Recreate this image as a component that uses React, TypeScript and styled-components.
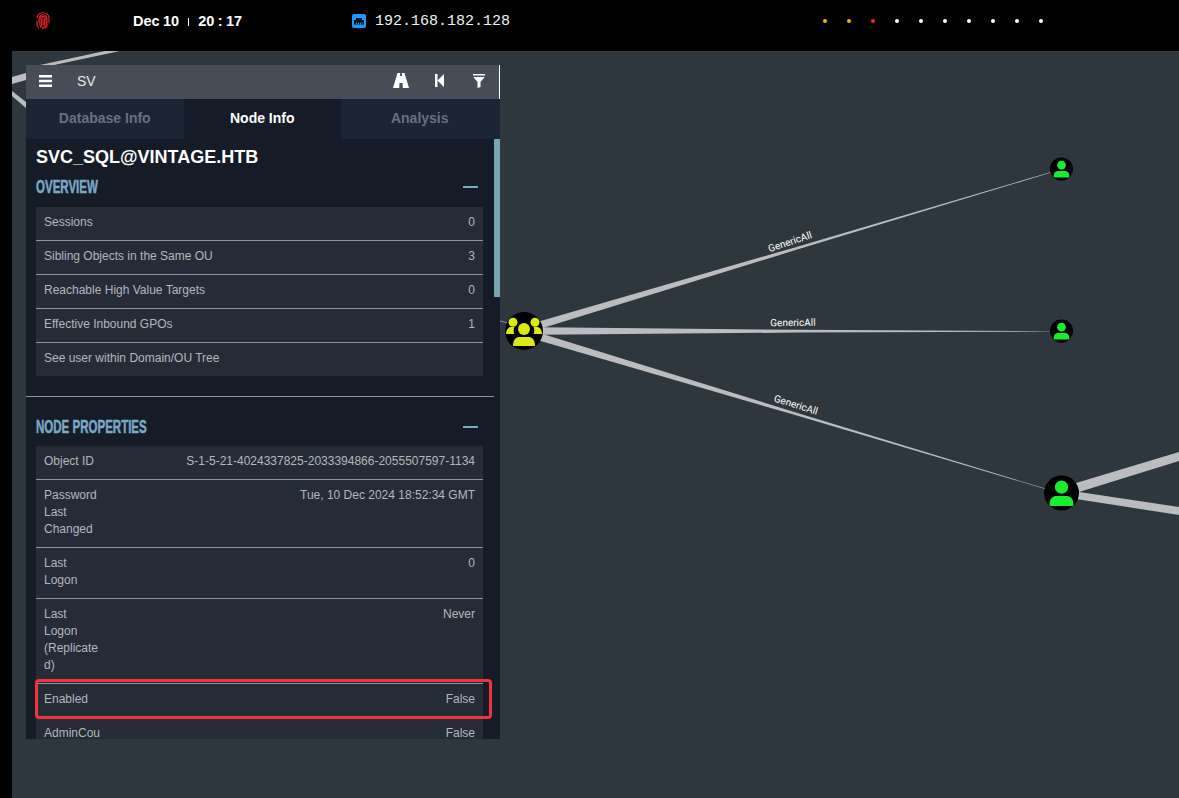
import styled, { createGlobalStyle } from "styled-components";

const overview = [
  { key: "Sessions", value: "0" },
  { key: "Sibling Objects in the Same OU", value: "3" },
  { key: "Reachable High Value Targets", value: "0" },
  { key: "Effective Inbound GPOs", value: "1" },
  { key: "See user within Domain/OU Tree", value: "" },
];

const properties = [
  { key: "Object ID", value: "S-1-5-21-4024337825-2033394866-2055507597-1134", wide: true },
  { key: "Password Last Changed", value: "Tue, 10 Dec 2024 18:52:34 GMT" },
  { key: "Last Logon", value: "0" },
  { key: "Last Logon (Replicated)", value: "Never" },
  { key: "Enabled", value: "False", marked: true },
  { key: "AdminCou", value: "False" },
];

const dots = ["#f5b400", "#f5b400", "#f0262c", "#fff", "#fff", "#fff", "#fff", "#fff", "#fff", "#fff"];

const Fingerprint = () => (
  <svg width="14" height="18" viewBox="0 0 14 18" fill="none" stroke="#e0252d" strokeWidth="1.100">
    <path d="M1 6.500C1 3 3.500.8 7 .8s6 2.200 6 5.700v5" />
    <path d="M1 8.500v3.200c0 2 .7 3.400 1.800 4.400M3 11V6.800C3 4.400 4.800 2.800 7 2.800s4 1.600 4 4v6.400c0 1-.2 1.800-.5 2.600" />
    <path d="M5 15.800c-.7-1.200-1-2.400-1-3.800V7c0-1.700 1.300-2.600 3-2.600S10 5.300 10 7v6c0 1.300-.3 2.400-.9 3.600" />
    <path d="M7 17c-.8-1.200-1.400-2.700-1.400-4.400V7.200C5.600 6.400 6.200 6 7 6s1.400.4 1.400 1.200v5.400c0 1.500-.3 2.800-1 4" />
    <path d="M7 7.500v5.500" />
  </svg>
);

const EthernetIcon = () => (
  <svg width="14" height="14" viewBox="0 0 14 14">
    <rect width="14" height="14" rx="2" fill="#2196f3" />
    <path d="M2 10.500V6h2V4h6v2h2v4.500z" fill="#06121c" />
    <path d="M4 8.500h1v2H4zM6 8.500h1v2H6zM8 8.500h1v2H8zM10 8.500h.6v2H10z" fill="#2196f3" />
  </svg>
);

const HamburgerIcon = () => (
  <svg width="13" height="12" viewBox="0 0 13 12" fill="#fff">
    <path d="M0 0h13v2.500H0zM0 4.750h13v2.500H0zM0 9.500h13V12H0z" />
  </svg>
);

const RoadIcon = () => (
  <svg width="16" height="15" viewBox="0 0 16 15" fill="#fff">
    <path d="M4.500 0h2.700l-.2 3h2l-.2-3h2.700L16 15H9.800l-.3-5H6.500l-.3 5H0z" />
    <path d="M6.800 5h2.400l.1 3H6.700z" />
  </svg>
);

const BackIcon = () => (
  <svg width="9" height="13" viewBox="0 0 9 13" fill="#fff">
    <path d="M0 0h2.500v13H0zM9 0v13L2.500 6.500z" />
  </svg>
);

const FilterIcon = () => (
  <svg width="15" height="14" viewBox="-3 0 15 14" fill="#fff">
    <path d="M0 0h12v1.500H0zM.3 3h11.400L7.500 8v5L4.500 14V8z" />
  </svg>
);

const UserNode = ({ cx, cy, r }: { cx: number; cy: number; r: number }) => (
  <g transform={`translate(${cx} ${cy}) scale(${r / 17.5})`}>
    <circle r="17.5" fill="#000" />
    <circle cy="-5.800" r="6.600" fill="#19ee2c" />
    <path d="M-12 11.500c0-6 3.500-8.500 7-8.500h10c3.500 0 7 2.500 7 8.500 0 1-.6 1.500-1.500 1.500h-21c-.9 0-1.500-.5-1.500-1.500z" fill="#19ee2c" />
  </g>
);

const GroupNode = ({ cx, cy }: { cx: number; cy: number }) => (
  <g transform={`translate(${cx} ${cy})`} fill="#dcea14">
    <circle r="19" fill="#000" />
    <circle cx="-11" cy="-8.800" r="4.500" />
    <circle cx="11" cy="-8.800" r="4.500" />
    <path d="M-18 3c0-4.500 2.500-7 5-7h3.500c-1 2-1.200 4.500-.2 7z" />
    <path d="M18 3c0-4.500-2.500-7-5-7H9.500c1 2 1.200 4.500.2 7z" />
    <circle cy="-2" r="6" />
    <path d="M-11 15c0-5.500 2.500-9 6-9H5c3.500 0 6 3.500 6 9z" />
  </g>
);

const edges = [
  { x1: 540, y1: 325, x2: 1052, y2: 172, label: "GenericAll", lx: 791, ly: 245, angle: -18.5 },
  { x1: 542, y1: 331, x2: 1050, y2: 331.4, label: "GenericAll", lx: 793, ly: 326, angle: -0.5 },
  { x1: 540, y1: 337, x2: 1046, y2: 489, label: "GenericAll", lx: 795, ly: 408, angle: 17.5 },
];

const taper = (x1: number, y1: number, x2: number, y2: number, w1: number, w2: number) => {
  const len = Math.hypot(x2 - x1, y2 - y1);
  const nx = -(y2 - y1) / len;
  const ny = (x2 - x1) / len;
  return [
    `${x1 + (nx * w1) / 2},${y1 + (ny * w1) / 2}`,
    `${x2 + (nx * w2) / 2},${y2 + (ny * w2) / 2}`,
    `${x2 - (nx * w2) / 2},${y2 - (ny * w2) / 2}`,
    `${x1 - (nx * w1) / 2},${y1 - (ny * w1) / 2}`,
  ].join(" ");
};

const Graph = () => (
  <GraphSvg width="1167" height="747" viewBox="12 51 1167 747">
    <polygon points="40,68 120,51 105,51 26,68" fill="#babcc0" />
    <polygon points="12,84 26,80 26,73 12,77" fill="#babcc0" />
    <polygon points="12,96 26,108 26,102 12,91" fill="#babcc0" />
    <line x1="500" y1="321" x2="508" y2="323" stroke="#8a8f94" strokeWidth="1" />
    {edges.map((edge) => {
      const mx = (edge.x1 + edge.x2) / 2;
      const my = (edge.y1 + edge.y2) / 2;
      return (
        <g key={edge.ly}>
          <polygon points={taper(edge.x1, edge.y1, mx, my, 7.5, 2.8)} fill="#babcc0" />
          <polygon points={taper(mx, my, edge.x2, edge.y2, 2.8, 0.4)} fill="#babcc0" />
          <EdgeLabel x={edge.lx} y={edge.ly} transform={`rotate(${edge.angle} ${edge.lx} ${edge.ly})`}>
            {edge.label}
          </EdgeLabel>
        </g>
      );
    })}
    <polygon points="1076,483 1179,452 1179,461 1079,492" fill="#babcc0" />
    <polygon points="1079,492 1179,507 1179,515 1076,499" fill="#babcc0" />
    <GroupNode cx={524} cy={331} />
    <UserNode cx={1061.5} cy={169} r={11.5} />
    <UserNode cx={1061.5} cy={331} r={11.5} />
    <UserNode cx={1061.5} cy={493} r={17.5} />
  </GraphSvg>
);

export default function App() {
  return (
    <Page>
      <GlobalStyle />
      <TopBar>
        <FingerprintSlot>
          <Fingerprint />
        </FingerprintSlot>
        <Clock>
          Dec 10
          <ClockBar />
          20 : 17
        </Clock>
        <Address>
          <EthernetIcon />
          <span>192.168.182.128</span>
        </Address>
        <Dots>
          {dots.map((color, i) => (
            <Dot key={i} $color={color} />
          ))}
        </Dots>
      </TopBar>
      <Canvas>
        <Graph />
        <Panel>
          <SearchBar>
            <MenuButton>
              <HamburgerIcon />
            </MenuButton>
            <SearchText>SV</SearchText>
            <ToolIcons>
              <RoadIcon />
              <BackIcon />
              <FilterIcon />
            </ToolIcons>
          </SearchBar>
          <Tabs>
            <Tab>Database Info</Tab>
            <Tab $active>Node Info</Tab>
            <Tab>Analysis</Tab>
          </Tabs>
          <Body>
            <ScrollThumb />
            <NodeName>SVC_SQL@VINTAGE.HTB</NodeName>
            <SectionHead>
              <SectionTitle>OVERVIEW</SectionTitle>
              <Collapse />
            </SectionHead>
            <Table>
              {overview.map((row) => (
                <Row key={row.key}>
                  <Key $wide>{row.key}</Key>
                  <Value>{row.value}</Value>
                </Row>
              ))}
            </Table>
            <Divider />
            <SectionHead $second>
              <SectionTitle>NODE PROPERTIES</SectionTitle>
              <Collapse />
            </SectionHead>
            <Table>
              {properties.map((row) => (
                <Row key={row.key}>
                  <Key $wide={row.wide}>{row.key}</Key>
                  <Value>{row.value}</Value>
                  {row.marked && <Highlight />}
                </Row>
              ))}
            </Table>
          </Body>
        </Panel>
      </Canvas>
    </Page>
  );
}

const GlobalStyle = createGlobalStyle`
  html, body {
    margin: 0;
    padding: 0;
    background: #000;
    overflow: hidden;
  }
`;

const Page = styled.div`
  width: 1179px;
  height: 798px;
  display: flex;
  flex-direction: column;
  font-family: "Liberation Sans", Arial, sans-serif;
  background: #000;
`;

const TopBar = styled.header`
  height: 51px;
  flex: none;
  display: flex;
  align-items: center;
  padding-bottom: 9px;
  box-sizing: border-box;
`;

const FingerprintSlot = styled.div`
  width: 133px;
  padding-left: 36px;
  box-sizing: border-box;
  display: flex;
`;

const Clock = styled.div`
  width: 219px;
  display: flex;
  align-items: center;
  color: #fff;
  font-size: 14.5px;
  font-weight: 700;
  word-spacing: -0.6px;
`;

const ClockBar = styled.i`
  width: 1.5px;
  height: 8px;
  margin: 1px 9px 0 8.5px;
  background: #fff;
`;

const Address = styled.div`
  width: 471px;
  display: flex;
  align-items: center;
  gap: 9px;
  color: #f2f2f2;
  font-family: "Liberation Mono", monospace;
  font-size: 15px;
`;

const Dots = styled.div`
  display: flex;
  gap: 20px;
`;

const Dot = styled.i<{ $color: string }>`
  width: 4px;
  height: 4px;
  border-radius: 50%;
  background: ${(p) => p.$color};
`;

const Canvas = styled.main`
  position: relative;
  flex: 1;
  margin-left: 12px;
  background: #2f373e;
  overflow: hidden;
`;

const GraphSvg = styled.svg`
  position: absolute;
  inset: 0;
`;

const EdgeLabel = styled.text`
  fill: #fff;
  font-family: Roboto, "Liberation Sans", sans-serif;
  font-size: 10px;
  text-anchor: middle;
`;

const Panel = styled.section`
  position: absolute;
  left: 14px;
  top: 14px;
  width: 474px;
  height: 674px;
  display: flex;
  flex-direction: column;
`;

const SearchBar = styled.div`
  height: 34px;
  flex: none;
  display: flex;
  align-items: center;
  padding-bottom: 3px;
  box-sizing: border-box;
  background: #464d57;
  border-right: 1px solid #fff;
`;

const MenuButton = styled.div`
  width: 51px;
  padding-left: 13px;
  box-sizing: border-box;
  display: flex;
`;

const SearchText = styled.div`
  flex: 1;
  color: #e8e9ea;
  font-size: 14px;
`;

const ToolIcons = styled.div`
  display: flex;
  align-items: center;
  gap: 26px;
  padding-right: 14px;
`;

const Tabs = styled.div`
  height: 40px;
  flex: none;
  display: flex;
  background: #1b2533;
`;

const Tab = styled.div<{ $active?: boolean }>`
  width: 157.5px;
  flex: none;
  display: flex;
  align-items: center;
  justify-content: center;
  padding-bottom: 3px;
  box-sizing: border-box;
  font-size: 14px;
  font-weight: 700;
  color: ${(p) => (p.$active ? "#fff" : "#6a717b")};
  background: ${(p) => (p.$active ? "#151c27" : "#1b2533")};
`;

const Body = styled.div`
  position: relative;
  flex: 1;
  min-height: 0;
  overflow: hidden;
  padding: 8px 17px 0 10px;
  background: #151c27;
`;

const ScrollThumb = styled.div`
  position: absolute;
  top: 0;
  right: 0;
  width: 6px;
  height: 158px;
  background: #76a6b1;
`;

const NodeName = styled.h1`
  margin: 0;
  height: 20px;
  line-height: 20px;
  color: #fff;
  font-size: 18px;
  font-weight: 700;
`;

const SectionHead = styled.div<{ $second?: boolean }>`
  display: flex;
  align-items: center;
  justify-content: space-between;
  height: 20px;
  margin: ${(p) => (p.$second ? "20px 0 9px" : "10px 0 10px")};
`;

const SectionTitle = styled.h2`
  margin: 0;
  color: #7aaac4;
  font-size: 18px;
  font-weight: 700;
  -webkit-text-stroke: 0.5px #7aaac4;
  transform: scaleX(0.64);
  transform-origin: left center;
`;

const Collapse = styled.i`
  width: 15px;
  height: 2px;
  margin-right: 5px;
  background: #7aaac4;
`;

const Table = styled.div`
  background: #252c38;
  color: #b4b7bc;
  font-size: 12px;
  line-height: 17px;
`;

const Row = styled.div`
  position: relative;
  display: flex;
  justify-content: space-between;
  padding: 7px 8px 9px;
  border-bottom: 1px solid #8f939a;
  &:last-child {
    border-bottom: 0;
  }
`;

const Key = styled.div<{ $wide?: boolean }>`
  width: ${(p) => (p.$wide ? "auto" : "57px")};
  white-space: ${(p) => (p.$wide ? "nowrap" : "normal")};
  overflow-wrap: anywhere;
  flex: none;
`;

const Value = styled.div`
  text-align: right;
`;

const Divider = styled.hr`
  margin: 20px -11px 0 -10px;
  border: 0;
  height: 1px;
  background: #8f939a;
`;

const Highlight = styled.div`
  position: absolute;
  left: -1.5px;
  right: -9px;
  top: -5px;
  bottom: -2px;
  border: 3px solid #f0343c;
  border-radius: 4px;
  box-sizing: border-box;
`;
